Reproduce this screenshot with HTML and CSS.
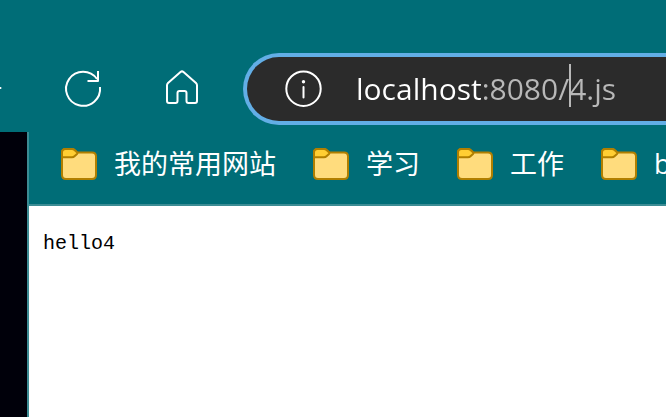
FILE: index.html
```html
<!DOCTYPE html>
<html lang="zh-CN">
<head>
<meta charset="utf-8">
<title>localhost:8080/4.js</title>
<link rel="stylesheet" href="styles.css">
</head>
<body>
<header class="toolbar">
  <nav class="controls">
    <button class="icon-button back" type="button" aria-label="返回">
      <svg viewBox="0 0 36 36"><path d="M16 5 3 18l13 13M3 18h31.500"/></svg>
    </button>
    <button class="icon-button" type="button" aria-label="刷新">
      <svg viewBox="0 0 36 36"><path d="M35 17A17 17 0 1 1 32 9M33 1V11H22.500" stroke-linecap="butt"/></svg>
    </button>
    <button class="icon-button" type="button" aria-label="主页">
      <svg viewBox="0 0 36 36"><path d="M16.500 2Q18 .800 19.500 2L32 13Q33 14 33 15.300V31Q33 33 31 33H24.500Q22.500 33 22.500 31V23Q22.500 21 20.500 21H15.500Q13.500 21 13.500 23V31Q13.500 33 11.500 33H5Q3 33 3 31V15.300Q3 14 4 13Z"/></svg>
    </button>
  </nav>
  <div class="address">
    <button class="icon-button" type="button" aria-label="站点信息">
      <svg viewBox="0 0 36 36"><circle cx="18.500" cy="17.700" r="17.200"/><path d="M18.500 16v10.500"/><circle class="dot" cx="18.500" cy="10.700" r="1.700"/></svg>
    </button>
    <div class="url-box">
      <input class="url" type="text" value="localhost:8080/4.js" aria-label="地址栏" spellcheck="false">
      <span class="caret"></span>
    </div>
  </div>
</header>
<div class="workspace">
  <aside class="backdrop"></aside>
  <div class="window">
    <nav class="bookmarks" aria-label="收藏夹">
      <a class="bookmark" href="#"><svg class="folder" viewBox="0 0 36 32"><use href="#folder"/></svg>我的常用网站</a>
      <a class="bookmark" href="#"><svg class="folder" viewBox="0 0 36 32"><use href="#folder"/></svg>学习</a>
      <a class="bookmark" href="#"><svg class="folder" viewBox="0 0 36 32"><use href="#folder"/></svg>工作</a>
      <a class="bookmark" href="#"><svg class="folder" viewBox="0 0 36 32"><use href="#folder"/></svg>b</a>
    </nav>
    <main class="page"><pre class="output">hello4</pre></main>
  </div>
</div>
<svg class="symbols" aria-hidden="true">
  <symbol id="folder" viewBox="0 0 36 32">
    <path d="M1 4.500Q1 1 4.500 1H11Q12.500 1 13.500 2L16 4.500H31Q35 4.500 35 8.500V27Q35 31 31 31H5Q1 31 1 27Z" fill="#ffdc7d" stroke="#b17f00" stroke-width="2"/>
    <path d="M1 9.300V4.500Q1 1 4.500 1H11Q12.500 1 13.500 2L16 4.300Q16.800 5.200 16 6L13.500 8.300Q12.500 9.300 11 9.300Z" fill="#ffce33" stroke="#b17f00" stroke-width="2"/>
  </symbol>
</svg>
</body>
</html>
```

FILE: styles.css
```css
* {
  box-sizing: border-box;
}

body {
  margin: 0;
  min-height: 100vh;
  display: flex;
  flex-direction: column;
  overflow: hidden;
  background: #006d77;
  color: #fff;
  font-family: "Open Sans", "Noto Sans CJK SC", sans-serif;
}

.toolbar {
  display: flex;
  align-items: center;
  gap: 43px;
  padding: 53px 0 7px;
}

.controls {
  display: flex;
  gap: 63px;
  padding-bottom: 2px;
}

.icon-button {
  flex: none;
  width: 36px;
  height: 36px;
  padding: 0;
  border: 0;
  background: none;
  color: #fff;
}

.icon-button svg {
  display: block;
  width: 100%;
  height: 100%;
  overflow: visible;
  fill: none;
  stroke: currentColor;
  stroke-width: 2;
  stroke-linecap: round;
  stroke-linejoin: round;
}

.icon-button .dot {
  fill: currentColor;
  stroke: none;
}

.back {
  margin-left: -34px;
}

.address {
  flex: 1;
  min-width: 0;
  height: 72px;
  display: flex;
  align-items: center;
  gap: 35px;
  padding-left: 38px;
  border: 4px solid #62aee6;
  border-right: 0;
  border-radius: 36px 0 0 36px;
  background: #2b2b2b;
}

.url-box {
  position: relative;
  flex: 1;
  min-width: 0;
}

.url {
  display: block;
  width: 100%;
  height: 44px;
  padding: 0;
  border: 0;
  outline: 0;
  background: linear-gradient(to right, #fff 126px, #b8b8b8 126px);
  -webkit-background-clip: text;
  background-clip: text;
  color: #b8b8b8;
  -webkit-text-fill-color: transparent;
  font: 30px/44px "Open Sans", sans-serif;
}

.caret {
  position: absolute;
  top: -3px;
  left: 213px;
  width: 2px;
  height: 43px;
  background: #b8b8b8;
}

.workspace {
  flex: 1;
  display: flex;
}

.backdrop {
  flex: none;
  width: 27px;
  background: #00000a;
}

.window {
  flex: 1;
  min-width: 0;
  display: flex;
  flex-direction: column;
  border-left: 2px solid #3c8c94;
}

.bookmarks {
  display: flex;
  gap: 37px;
  height: 74px;
  padding: 0 0 8px 32px;
  border-bottom: 2px solid #3c8c94;
  overflow: hidden;
}

.bookmark {
  flex: none;
  display: flex;
  align-items: center;
  gap: 17px;
  color: #fff;
  font-size: 27px;
  line-height: 40px;
  text-decoration: none;
}

.folder {
  width: 36px;
  height: 32px;
}

.page {
  flex: 1;
  padding: 26px 14px;
  background: #fff;
  color: #000;
}

.output {
  margin: 0;
  font: 20px/24px "Liberation Mono", monospace;
}

.symbols {
  position: absolute;
  width: 0;
  height: 0;
}
```
